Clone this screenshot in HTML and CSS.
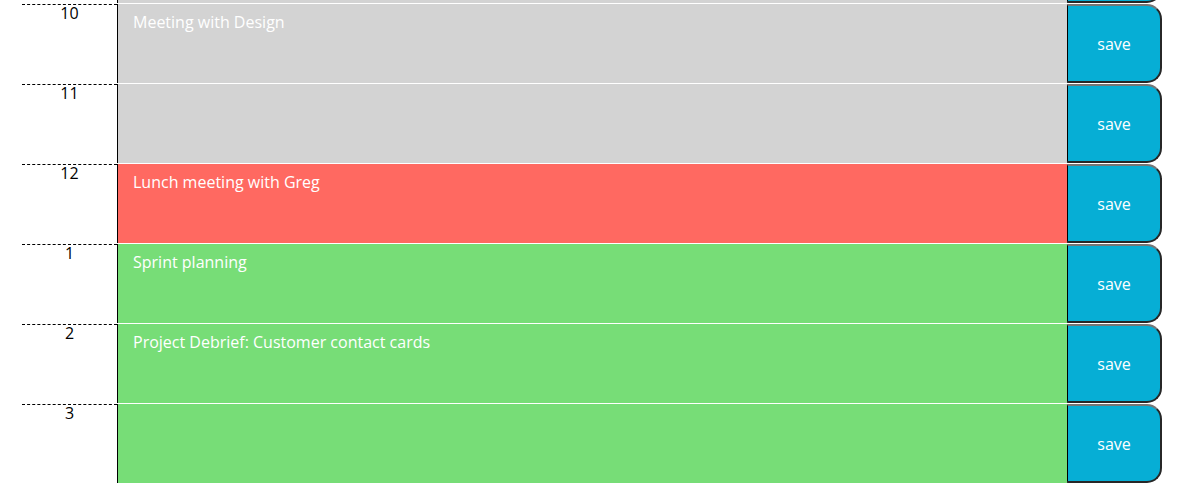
FILE: index.html
```html
<!DOCTYPE html>
<html lang="en">
<head>
<meta charset="utf-8">
<title>Work Day Scheduler</title>
<link rel="stylesheet" href="styles.css">
</head>
<body>
<main class="container">
  <div class="row past" id="hour-9">
    <div class="hour">9</div>
    <textarea class="description"></textarea>
    <button class="saveBtn">save</button>
  </div>
  <div class="row past" id="hour-10">
    <div class="hour">10</div>
    <textarea class="description">Meeting with Design</textarea>
    <button class="saveBtn">save</button>
  </div>
  <div class="row past" id="hour-11">
    <div class="hour">11</div>
    <textarea class="description"></textarea>
    <button class="saveBtn">save</button>
  </div>
  <div class="row present" id="hour-12">
    <div class="hour">12</div>
    <textarea class="description">Lunch meeting with Greg</textarea>
    <button class="saveBtn">save</button>
  </div>
  <div class="row future" id="hour-13">
    <div class="hour">1</div>
    <textarea class="description">Sprint planning</textarea>
    <button class="saveBtn">save</button>
  </div>
  <div class="row future" id="hour-14">
    <div class="hour">2</div>
    <textarea class="description">Project Debrief: Customer contact cards</textarea>
    <button class="saveBtn">save</button>
  </div>
  <div class="row future" id="hour-15">
    <div class="hour">3</div>
    <textarea class="description"></textarea>
    <button class="saveBtn">save</button>
  </div>
</main>
<script src="script.js"></script>
</body>
</html>
```

FILE: styles.css
```css
html {
  scrollbar-width: none;
}
html::-webkit-scrollbar {
  display: none;
}
* {
  box-sizing: border-box;
}
body {
  margin: 0;
  font-family: "Open Sans", "Liberation Sans", sans-serif;
  font-size: 16px;
  line-height: 1;
  color: #212529;
  background: #ffffff;
}
.container {
  width: 1140px;
  margin-left: 22px;
  padding-bottom: 20px;
}
.row {
  display: grid;
  grid-template-columns: 95px 950px 95px;
  height: 80px;
  border-top: 1px solid #ffffff;
}
.hour {
  background: #ffffff;
  color: #000000;
  border-top: 1px dashed #000000;
  text-align: center;
  font-size: 16px;
  line-height: 1;
}
.description {
  margin: 0;
  border: none;
  border-left: 1px solid #000000;
  resize: none;
  padding: 10px 15px;
  font-family: "Open Sans", "Liberation Sans", sans-serif;
  font-size: 16px;
  line-height: 1;
  color: #ffffff;
  outline: none;
  overflow: hidden;
}
.past .description {
  background: #d3d3d3;
}
.present .description {
  background: #ff6961;
}
.future .description {
  background: #77dd77;
}
.saveBtn {
  margin: 0;
  padding: 0;
  background: #06aed5;
  color: #ffffff;
  font-family: "Open Sans", "Liberation Sans", sans-serif;
  font-size: 16px;
  line-height: 1;
  border-top: 2px solid #767676;
  border-right: 2px solid #272727;
  border-bottom: 2px solid #272727;
  border-left: 1px solid #000000;
  border-top-right-radius: 15px;
  border-bottom-right-radius: 15px;
  cursor: pointer;
}
```

FILE: script.js
```js
function alignView() {
  var row = document.getElementById('hour-10');
  var top = row.getBoundingClientRect().top + window.scrollY - 3;
  window.scrollTo(0, top);
}
alignView();
window.addEventListener('load', alignView);
```
